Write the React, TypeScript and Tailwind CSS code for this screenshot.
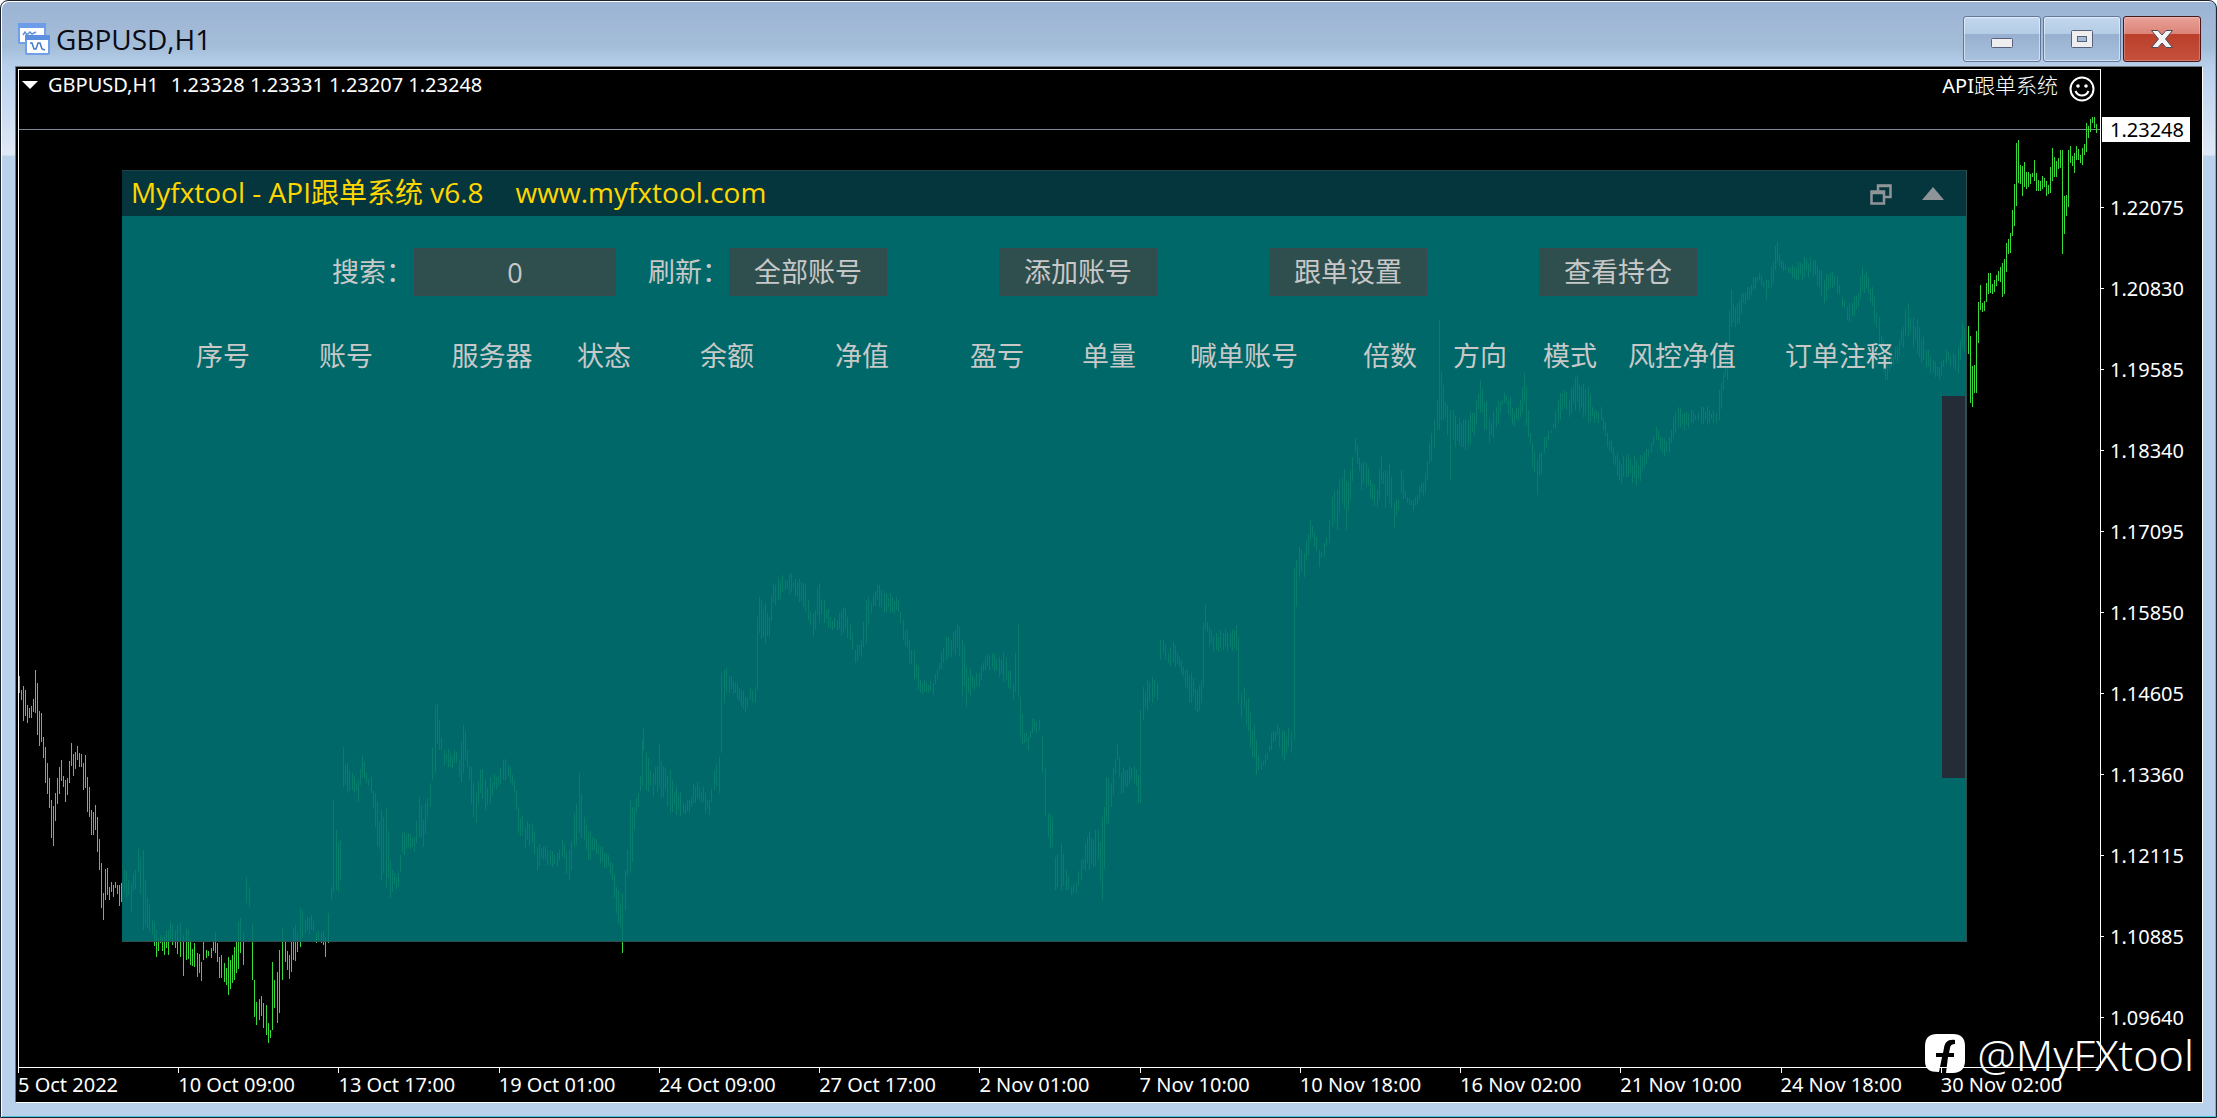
import { useState } from "react";

// x, high, low of each bar; gaps wider than one bar are filled in between
const SERIES = `
19,676,693 21,690,700 23,686,721 25,690,716 27,705,723 29,708,718 31,706,718 33,699,712 35,670,713 37,683,735
39,711,746 41,713,742 43,737,758 45,747,783 47,763,794 49,778,808 51,800,838 53,806,846 55,793,821 57,778,804
59,767,794 61,760,781 63,776,787 65,780,802 67,778,795 69,761,783 71,743,766 73,754,776 75,752,769 77,746,760
79,753,767 81,754,767 83,763,790 85,755,788 87,777,812 89,787,817 91,810,835 93,812,835 95,805,830 97,817,852
99,839,870 101,863,908 103,893,920 105,869,900 107,868,895 109,887,900 111,882,892 113,885,897 115,882,888
117,885,894 119,885,906 121,883,902 124,870,893 131,883,912 138,848,873 143,850,930 147,898,928 152,920,935
156,930,957 160,935,943 164,935,955 168,930,955 170,921,940 175,930,948 180,923,957 183,935,976 186,928,960
190,940,965 194,943,967 197,953,977 201,962,981 203,942,960 206,950,958 211,948,958 215,932,953 219,957,978
224,963,982 228,957,995 232,955,983 236,942,973 240,918,953 243,933,965 246,877,903 249,887,907 252,923,980
254,980,1017 256,1002,1025 259,999,1020 263,1003,1028 266,1005,1035 268,1023,1043 270,1030,1038 272,962,1030
274,980,1008 277,972,1023 279,950,1013 282,928,980 285,940,962 289,955,979 293,928,960 297,933,952 300,908,947
305,920,933 311,915,930 316,933,943 321,933,943 325,937,957 328,913,943 331,887,900 333,800,893 336,830,890
340,840,880 343,747,787 347,763,793 352,773,790 358,780,802 362,755,778 366,773,783 371,777,793 375,793,827
381,810,880 386,807,887 392,870,892 398,873,887 402,833,853 408,833,847 414,837,852 419,797,837 423,820,847
430,783,807 435,705,773 439,720,750 444,750,765 450,753,767 456,752,763 459,760,777 463,725,773 467,750,767
473,783,817 476,793,823 480,770,793 485,780,810 490,777,803 498,775,785 503,760,780 508,765,777 514,780,793
518,807,833 525,827,848 532,823,843 537,847,870 543,847,860 550,850,865 557,853,867 562,840,857 569,850,880
574,813,847 579,773,833 584,817,840 588,833,860 594,838,850 600,847,863 606,853,867 612,863,880 616,887,913
620,903,927 622,893,953 625,870,910 630,800,873 634,807,830 638,793,807 642,740,787 643,728,750 646,753,790
653,773,797 659,744,787 663,767,797 670,770,813 676,787,815 683,803,813 689,800,813 693,783,803 699,787,800
705,793,813 709,800,815 714,770,790 719,757,793 721,673,753 724,670,703 729,677,693 735,683,693 741,690,707
745,697,712 750,688,700 755,687,703 757,617,690 759,597,633 763,607,637 769,617,637 773,583,603 778,577,600
785,580,590 791,573,592 797,583,597 803,583,607 808,600,620 813,613,637 819,583,623 824,600,623 830,617,628
837,620,630 843,607,633 850,623,640 855,650,663 861,640,657 866,600,643 871,603,613 877,585,600 884,593,613
892,597,613 898,600,612 903,620,640 909,640,663 914,650,680 920,680,693 926,683,692 933,683,695 939,663,670
946,637,660 951,640,657 957,623,647 962,640,697 966,667,707 972,675,687 979,673,687 985,657,670 992,653,667
999,657,677 1006,657,680 1013,683,700 1018,625,697 1020,697,737 1024,733,743 1028,737,750 1032,718,733
1039,720,730 1042,737,773 1045,767,817 1048,813,837 1052,817,847 1055,857,890 1060,843,890 1065,870,890
1070,887,895 1075,883,893 1080,860,880 1086,837,863 1092,840,867 1097,830,860 1101,817,900 1105,777,823
1110,783,807 1116,744,760 1120,773,793 1126,770,787 1133,767,783 1137,775,803 1139,710,803 1142,687,720
1146,680,710 1151,677,703 1156,683,700 1159,640,660 1162,640,653 1167,653,663 1172,642,663 1178,657,667
1184,670,687 1190,673,703 1196,690,713 1200,680,703 1202,623,687 1204,605,630 1208,627,647 1215,633,650
1222,633,650 1229,633,647 1235,625,650 1237,637,703 1240,693,717 1243,687,707 1249,713,747 1255,740,775
1260,763,770 1266,753,760 1270,733,750 1276,725,735 1281,730,757 1290,733,753 1293,568,740 1295,560,607
1298,547,577 1303,553,577 1309,520,540 1313,533,547 1318,550,567 1323,543,557 1328,520,543 1331,497,527
1336,490,530 1341,477,503 1345,480,530 1349,470,500 1354,438,453 1360,463,490 1365,463,487 1371,483,500
1376,490,507 1380,455,483 1384,470,507 1388,463,503 1393,503,527 1397,500,510 1400,470,493 1406,497,503
1412,500,510 1418,487,500 1424,473,493 1428,443,463 1433,420,447 1436,400,430 1438,320,430 1440,372,420
1446,405,435 1449,410,480 1452,410,440 1458,418,445 1462,420,447 1467,420,447 1475,400,425 1479,380,413
1488,420,443 1495,407,427 1503,393,403 1509,397,417 1513,413,427 1519,400,417 1523,373,403 1527,410,437
1531,443,467 1536,460,495 1543,437,453 1550,430,433 1557,400,423 1563,390,407 1568,400,417 1574,377,410
1580,387,407 1587,387,423 1593,410,423 1600,407,420 1606,433,447 1612,447,463 1618,460,480 1625,457,477
1635,460,486 1643,453,467 1650,443,453 1655,427,440 1661,437,453 1668,437,453 1672,417,437 1677,407,427
1683,413,430 1690,410,423 1697,413,420 1700,407,423 1708,410,423 1715,413,423 1718,390,420 1722,373,390
1726,347,380 1728,310,347 1730,290,327 1734,307,327 1738,300,323 1742,293,303 1748,287,300 1752,277,290
1758,273,280 1765,280,300 1770,267,287 1776,242,263 1780,260,268 1787,267,273 1795,267,280 1803,257,277
1812,260,277 1818,270,287 1823,280,303 1829,273,287 1836,277,293 1841,297,307 1846,307,320 1851,303,317
1857,293,307 1861,267,290 1867,277,293 1873,297,323 1878,317,347 1884,357,380 1890,357,367 1898,340,357
1907,303,337 1912,317,347 1918,327,357 1925,350,367 1932,360,373 1938,367,380 1945,350,363 1952,353,367
1957,347,373 1961,323,347 1965,330,352 1967,326,354 1969,336,403 1971,366,407 1973,365,393 1975,331,393
1977,302,343 1979,285,310 1981,303,312 1983,301,311 1985,283,302 1987,273,294 1989,273,293 1991,284,294
1993,280,292 1995,275,286 1997,271,281 1999,267,282 2001,263,297 2003,259,294 2005,243,272 2007,239,254
2009,233,253 2011,210,236 2013,184,226 2015,143,206 2017,140,183 2019,165,184 2021,166,196 2023,162,187
2025,172,189 2027,172,187 2029,174,184 2031,173,177 2033,160,181 2035,173,191 2037,180,191 2039,181,191
2041,176,189 2043,178,187 2045,181,196 2047,185,194 2049,167,193 2051,148,181 2053,157,177 2055,161,177
2057,158,169 2059,150,168 2061,150,254 2063,196,234 2065,195,216 2067,150,207 2069,146,163 2071,156,166
2073,153,173 2075,146,160 2077,149,160 2079,155,163 2081,148,165 2083,144,155 2085,123,152 2087,126,138
2089,119,132 2091,117,123 2093,117,128 2095,124,133`;

const PRICES = ["1.22075", "1.20830", "1.19585", "1.18340", "1.17095", "1.15850", "1.14605", "1.13360", "1.12115", "1.10885", "1.09640"];

const TIMES = ["5 Oct 2022", "10 Oct 09:00", "13 Oct 17:00", "19 Oct 01:00", "24 Oct 09:00", "27 Oct 17:00", "2 Nov 01:00", "7 Nov 10:00", "10 Nov 18:00", "16 Nov 02:00", "21 Nov 10:00", "24 Nov 18:00", "30 Nov 02:00"];

const COLUMNS = [
    { name: "序号", width: "w-[90px]" },
    { name: "账号", width: "w-[156px]" },
    { name: "服务器", width: "w-[136px]" },
    { name: "状态", width: "w-[88px]" },
    { name: "余额", width: "w-[158px]" },
    { name: "净值", width: "w-[112px]" },
    { name: "盈亏", width: "w-[158px]" },
    { name: "单量", width: "w-[66px]" },
    { name: "喊单账号", width: "w-[204px]" },
    { name: "倍数", width: "w-[88px]" },
    { name: "方向", width: "w-[92px]" },
    { name: "模式", width: "w-[88px]" },
    { name: "风控净值", width: "w-[136px]" },
    { name: "订单注释", width: "w-[178px]" },
]

function buildBars() {
    const points = SERIES.trim().split(/\s+/).map((p) => p.split(",").map(Number))
    let d = ""
    points.forEach(([x, hi, lo], i) => {
        d += `M${x} ${hi}V${lo}`
        const next = points[i + 1]
        if (!next) return
        for (let bx = x + 2; bx < next[0] - 1; bx += 2) {
            const t = (bx - x) / (next[0] - x)
            const top = hi + (next[1] - hi) * t
            const bottom = lo + (next[2] - lo) * t
            const h = bottom - top
            const up = (((bx * 37) % 17) / 17 - 0.4) * h * 0.6
            const down = (((bx * 53) % 19) / 19 - 0.6) * h * 0.6
            d += `M${bx} ${Math.round(top + up)}V${Math.round(bottom + down)}`
        }
    })
    return d
}

const BARS = buildBars()

function PriceChart() {
    return (
        <svg className="absolute inset-0 w-full h-full" viewBox="19 70 2080 997" preserveAspectRatio="none" shapeRendering="crispEdges" aria-hidden="true">
            <path d="M19 129.5H2100" stroke="#778899" strokeWidth="1" />
            <path d={BARS} transform="translate(.5 0)" stroke="#38dc38" strokeWidth="1" fill="none" />
        </svg>
    )
}

function WindowButtons() {
    const glass = "w-[78px] h-[46px] flex items-center justify-center border rounded-[3px] border-[#62779a] bg-[linear-gradient(to_bottom,#c3d7ee,#b4cce6_38%,#97b0cf_39%,#a9c2df)] shadow-[inset_0_0_0_1px_rgba(255,255,255,0.5)]"
    return (
        <div className="flex gap-[2px] pt-[15px]">
            <button className={glass} aria-label="Minimize">
                <svg width="22" height="46" viewBox="0 0 22 46">
                    <rect x=".5" y="22.500" width="21" height="9" rx="1" fill="#eee" stroke="#56607a" />
                </svg>
            </button>
            <button className={glass} aria-label="Maximize">
                <svg width="22" height="46" viewBox="0 0 22 46">
                    <rect x=".5" y="14.500" width="21" height="17" rx="1" fill="#eee" stroke="#56607a" />
                    <rect x="6.500" y="20.500" width="9" height="5" fill="#a5bad3" stroke="#56607a" />
                </svg>
            </button>
            <button className="w-[78px] h-[46px] flex items-center justify-center border rounded-[3px] border-[#47171c] bg-[linear-gradient(to_bottom,#e9a299,#dc8377_38%,#bb3f2b_39%,#c4513c)] shadow-[inset_0_0_0_1px_rgba(255,255,255,0.25)]" aria-label="Close">
                <svg width="24" height="20" viewBox="0 0 24 20">
                    <path d="M1.500 1.500H8L12 6 16 1.500H22.500L15.500 10 22.500 18.500H16L12 14 8 18.500H1.500L8.500 10Z" fill="#f4f4f4" stroke="#4d4a5c" />
                </svg>
            </button>
        </div>
    )
}

function TitleBar() {
    return (
        <header className="h-[65px] shrink-0 flex justify-between pl-[17px] pr-[15px]">
            <div className="flex items-center gap-[6px] pt-[11px]">
                <svg width="32" height="32" viewBox="0 0 32 32">
                    <rect x="1" y="1" width="26" height="19" rx="1" fill="#fff" stroke="#6f9fe6" strokeWidth="2" />
                    <rect x="0" y="0" width="28" height="5" fill="#6a9ce8" />
                    <path d="M5 12l2-3 2 3 3-3 2 2 4-2" fill="none" stroke="#5f90dc" strokeWidth="1.500" />
                    <rect x="8" y="13" width="23" height="18" rx="1" fill="#fff" stroke="#6f9fe6" strokeWidth="2" />
                    <rect x="7" y="12" width="25" height="5" fill="#5c8fe0" />
                    <path d="M12 20l2 0 2 6 2 0 2-6 2 0 2 6 3 1" fill="none" stroke="#4878c8" strokeWidth="1.500" />
                </svg>
                <h1 className="text-[28px] leading-8 text-[#0a0a14]">GBPUSD,H1</h1>
            </div>
            <WindowButtons />
        </header>
    )
}

function CopyPanel() {
    const [search, setSearch] = useState("0")
    const control = "h-[48px] w-[158px] bg-[#2f4f4f] border border-[#3a4a50] text-center"

    return (
        <section className="relative flex-1 flex flex-col mt-[70px] mb-[125px] ml-[103px] mr-[133px] border-r border-b border-[#2f4f4f] bg-[#007373]/90 text-[27px] leading-9 text-[#c8c8c8]">
            <div className="h-[46px] flex items-center justify-between bg-[#06363d] border-t border-[#1f4348] pl-[9px] pr-[22px]">
                <h2 className="flex gap-[32px] pb-[4px] text-[28px] text-[#ffd700]">
                    <span>Myfxtool - API跟单系统 v6.8</span>
                    <span>www.myfxtool.com</span>
                </h2>
                <div className="flex items-center gap-[30px]">
                    <button aria-label="Restore">
                        <svg width="22" height="22" viewBox="0 0 22 22" fill="none" stroke="#8f9498" strokeWidth="2.500">
                            <path d="M8 8V2.500H20.500V14H15" />
                            <path d="M7 3H21" />
                            <path d="M1.500 8.500H14V20.500H1.500Z" />
                            <path d="M1 10H15" />
                        </svg>
                    </button>
                    <button aria-label="Collapse">
                        <svg width="22" height="14" viewBox="0 0 22 14">
                            <path d="M11 0L22 13H0Z" fill="#8f9498" />
                        </svg>
                    </button>
                </div>
            </div>
            <div className="flex items-center pt-[32px] pl-[210px]">
                <label htmlFor="search" className="w-[82px]">搜索：</label>
                <input id="search" className="h-[48px] w-[202px] bg-[#2f4f4f] border border-[#3a4a50] text-center" value={search} onChange={(e) => setSearch(e.target.value)} />
                <span className="w-[81px] ml-[32px]">刷新：</span>
                <div className="flex gap-[112px]">
                    <button className={control}>全部账号</button>
                    <button className={control}>添加账号</button>
                    <button className={control}>跟单设置</button>
                    <button className={control}>查看持仓</button>
                </div>
            </div>
            <div className="pt-[42px] pb-[22px] pl-[56px] pr-[38px]">
                <table className="table-fixed w-full">
                    <thead>
                        <tr>
                            {COLUMNS.map((c) => (
                                <th key={c.name} className={`${c.width} p-0 font-normal text-center whitespace-nowrap`}>{c.name}</th>
                            ))}
                        </tr>
                    </thead>
                </table>
            </div>
            <div className="flex-1 flex justify-end pr-[1px]">
                <div className="w-[23px] h-[70%] bg-[#242c38]" />
            </div>
        </section>
    )
}

function Watermark() {
    return (
        <div className="absolute right-[8px] bottom-[20px] flex items-center gap-[12px] text-white">
            <svg width="40" height="42" viewBox="0 0 40 42">
                <path d="M12 0H28C36 0 40 4 40 12V27C40 34 36 39 28 39H21L23 23H29V19H24L25 14C25.500 11 27 10 30 10V6C23 5 20 8 19 14L18 19H11V23H17L14 38C4 38 0 35 0 27V12C0 4 4 0 12 0Z" fill="#fff" />
            </svg>
            <span className="text-[43px] leading-[54px] font-light">@MyFXtool</span>
        </div>
    )
}

export default function App() {
    return (
        <main className="min-h-screen flex flex-col bg-[linear-gradient(to_bottom,#9bb4d4_0px,#a2bad7_30px,#a3bdd8_45px,#b8d0ec_66px,#dfe9f6_154px,#b9d1ea_155px)] border border-[#1c2430] rounded-t-[8px] shadow-[inset_1px_1px_0_#ffffff,inset_-1px_-1px_0_#4cc4dc] font-['Open_Sans','Noto_Sans_CJK_SC',sans-serif]">
            <TitleBar />
            <div className="relative flex-1 flex flex-col ml-[14px] mr-[13px] mb-[14px] pl-[2px] pt-[2px] bg-black border border-l-[#6e7680] border-t-[#6e7680] border-r-white border-b-white text-white text-[20px] leading-6 font-['Noto_Sans','Noto_Sans_CJK_SC',sans-serif]">
                <div className="flex-1 flex">
                    <div className="relative flex-1 flex flex-col border border-white font-['Open_Sans','Noto_Sans_CJK_SC',sans-serif]">
                        <PriceChart />
                        <div className="relative h-[30px] flex items-center justify-between pl-[3px] pr-[5px] font-['Noto_Sans','Noto_Sans_CJK_SC',sans-serif]">
                            <div className="flex items-center">
                                <svg width="16" height="8" viewBox="0 0 16 8">
                                    <path d="M0 0H16L8 8Z" fill="#fff" />
                                </svg>
                                <span className="ml-[10px]">GBPUSD,H1</span>
                                <span className="ml-[12px]">1.23328 1.23331 1.23207 1.23248</span>
                            </div>
                            <div className="flex items-center gap-[11px]">
                                <span>API<span className="text-[21px] font-light">跟单系统</span></span>
                                <svg className="mt-[8px]" width="26" height="26" viewBox="0 0 26 26" fill="none" stroke="#fff" strokeWidth="2">
                                    <circle cx="13" cy="13" r="11.500" />
                                    <circle cx="9" cy="10" r="1.800" fill="#fff" stroke="none" />
                                    <circle cx="17" cy="10" r="1.800" fill="#fff" stroke="none" />
                                    <path d="M6.500 15C9 21 17 21 19.500 15" />
                                </svg>
                            </div>
                        </div>
                        <CopyPanel />
                    </div>
                    <div className="relative w-[101px] flex flex-col pt-[98px] pb-[10px]">
                        <span className="absolute top-[48px] left-[1px] w-[88px] pl-[8px] leading-[25px] bg-white text-black">1.23248</span>
                        {PRICES.map((p) => (
                            <div key={p} className="flex-1 flex items-center gap-[6px]">
                                <span className="w-[3px] h-px bg-white" />
                                {p}
                            </div>
                        ))}
                    </div>
                </div>
                <div className="h-[34px] grid grid-cols-13 mr-[101px]">
                    {TIMES.map((t) => (
                        <div key={t} className="whitespace-nowrap">
                            <div className="w-px h-[5px] bg-white" />
                            <span>{t}</span>
                        </div>
                    ))}
                </div>
                <Watermark />
            </div>
        </main>
    );
}
